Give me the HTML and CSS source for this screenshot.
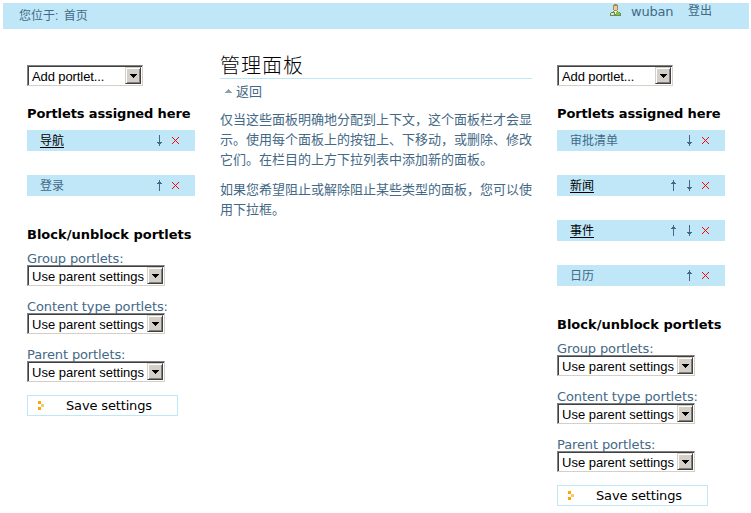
FILE: index.html
```html
<!DOCTYPE html>
<html lang="zh">
<head>
<meta charset="utf-8">
<title>管理面板</title>
<link rel="stylesheet" href="styles.css">
</head>
<body>
<svg class="defs" width="0" height="0" aria-hidden="true" shape-rendering="crispEdges">
  <symbol id="down" viewBox="0 0 7 11"><path fill="#436986" d="M3 0h1v11h-1zM1 7h5v1h-5zM2 8h3v1h-3z"/></symbol>
  <symbol id="up" viewBox="0 0 7 11"><path fill="#436986" d="M3 0h1v11h-1zM2 2h3v1h-3zM1 3h5v1h-5z"/></symbol>
  <symbol id="close" viewBox="0 0 7 7"><path fill="#f00" d="M0 0h1v1h-1zM1 1h1v1h-1zM2 2h1v1h-1zM3 3h1v1h-1zM4 2h1v1h-1zM5 1h1v1h-1zM6 0h1v1h-1zM2 4h1v1h-1zM1 5h1v1h-1zM0 6h1v1h-1zM4 4h1v1h-1zM5 5h1v1h-1zM6 6h1v1h-1z"/></symbol>
  <symbol id="caret" viewBox="0 0 7 4"><path d="M0 0h7v1h-7zM1 1h5v1h-5zM2 2h3v1h-3zM3 3h1v1h-1z"/></symbol>
  <symbol id="save" viewBox="0 0 6 9"><path fill="#ffa500" d="M0 0h3v3h-3zM0 6h3v3h-3z"/><path fill="#f8c878" d="M3 3h3v3h-3z"/></symbol>
</svg>
<header class="bar">
  <div class="crumbs">您位于: <a>首页</a></div>
  <div class="user">
    <svg class="avatar" width="11" height="12" viewBox="0 0 11 12" shape-rendering="crispEdges"><path fill="#a08a5c" d="M4 0h3v1h1v5h-1v1h-3v-1h-1v-5h1z"/><path fill="#f3c795" d="M4 2h3v4h-3z"/><path fill="#6d8a5c" d="M1 8h2v-1h5v1h2v1h1v3h-11v-3h1z"/><path fill="#d5e8b0" d="M1 9h3v2h-3z"/><path fill="#7fc440" d="M6 8h3v1h1v2h-4z"/><path fill="#f6eddc" d="M4 7h3v1h-1v2h-1v-2h-1z"/></svg>
    <span class="name">wuban</span><span class="logout">登出</span>
  </div>
</header>
<div class="columns">
  <aside class="side">
    <div class="select add"><span>Add portlet...</span><i><svg width="7" height="4"><use href="#caret"/></svg></i></div>
    <h2 class="assigned">Portlets assigned here</h2>
    <div class="portlet"><a class="link">导航</a><svg width="7" height="11"><use href="#down"/></svg><svg width="7" height="7"><use href="#close"/></svg></div>
    <div class="portlet"><span>登录</span><svg width="7" height="11"><use href="#up"/></svg><svg width="7" height="7"><use href="#close"/></svg></div>
    <h2 class="block">Block/unblock portlets</h2>
    <div class="field"><label>Group portlets:</label><div class="select"><span>Use parent settings</span><i><svg width="7" height="4"><use href="#caret"/></svg></i></div></div>
    <div class="field"><label>Content type portlets:</label><div class="select"><span>Use parent settings</span><i><svg width="7" height="4"><use href="#caret"/></svg></i></div></div>
    <div class="field"><label>Parent portlets:</label><div class="select"><span>Use parent settings</span><i><svg width="7" height="4"><use href="#caret"/></svg></i></div></div>
    <div class="save"><svg width="6" height="9"><use href="#save"/></svg><span>Save settings</span></div>
  </aside>
  <main>
    <h1>管理面板</h1>
    <div class="back"><svg width="7" height="4" viewBox="0 0 7 4" shape-rendering="crispEdges"><path fill="#8fa5ae" d="M3 0h1v1h-1zM2 1h3v1h-3zM1 2h5v1h-5zM0 3h7v1h-7z"/></svg><a>返回</a></div>
    <p>仅当这些面板明确地分配到上下文，这个面板栏才会显<br>示。使用每个面板上的按钮上、下移动，或删除、修改<br>它们。在栏目的上方下拉列表中添加新的面板。</p>
    <p>如果您希望阻止或解除阻止某些类型的面板，您可以使<br>用下拉框。</p>
  </main>
  <aside class="side">
    <div class="select add"><span>Add portlet...</span><i><svg width="7" height="4"><use href="#caret"/></svg></i></div>
    <h2 class="assigned">Portlets assigned here</h2>
    <div class="portlet"><span>审批清单</span><svg width="7" height="11"><use href="#down"/></svg><svg width="7" height="7"><use href="#close"/></svg></div>
    <div class="portlet"><a class="link">新闻</a><svg width="7" height="11"><use href="#up"/></svg><svg width="7" height="11"><use href="#down"/></svg><svg width="7" height="7"><use href="#close"/></svg></div>
    <div class="portlet"><a class="link">事件</a><svg width="7" height="11"><use href="#up"/></svg><svg width="7" height="11"><use href="#down"/></svg><svg width="7" height="7"><use href="#close"/></svg></div>
    <div class="portlet"><span>日历</span><svg width="7" height="11"><use href="#up"/></svg><svg width="7" height="7"><use href="#close"/></svg></div>
    <h2 class="block">Block/unblock portlets</h2>
    <div class="field"><label>Group portlets:</label><div class="select"><span>Use parent settings</span><i><svg width="7" height="4"><use href="#caret"/></svg></i></div></div>
    <div class="field"><label>Content type portlets:</label><div class="select"><span>Use parent settings</span><i><svg width="7" height="4"><use href="#caret"/></svg></i></div></div>
    <div class="field"><label>Parent portlets:</label><div class="select"><span>Use parent settings</span><i><svg width="7" height="4"><use href="#caret"/></svg></i></div></div>
    <div class="save"><svg width="6" height="9"><use href="#save"/></svg><span>Save settings</span></div>
  </aside>
</div>
</body>
</html>
```
FILE: styles.css
```css
* { box-sizing: border-box; }
html { overflow: hidden; }
body { margin: 0; padding: 3px 2px 0 3px; background: #fff; color: #436986; font: 13px/16px "DejaVu Sans", "Noto Sans CJK SC", sans-serif; white-space: nowrap; }
svg { display: block; flex: none; }
.defs { position: absolute; }
.bar { height: 26px; background: #bfe7f8; display: flex; justify-content: space-between; padding: 0 37px 0 16px; font-size: 12px; }
.crumbs { padding-top: 5px; font-family: "Liberation Sans", "Noto Sans CJK SC", sans-serif; }
.crumbs a { margin-left: 2px; }
.user { display: flex; }
.avatar { margin: 1px 10px 0 0; }
.name { font-size: 13px; width: 43px; padding-top: 1px; letter-spacing: -.2px; margin-right: 14px; }
.logout { width: 24px; line-height: 14px; font-family: "Noto Sans CJK SC", sans-serif; }
.columns { display: grid; grid-template-columns: 168px 312px 168px; column-gap: 25px; padding-left: 24px; }
.side { padding-top: 36px; }
.select { display: flex; width: 138px; height: 21px; border: 1px solid; border-color: #808080 #d4d0c8 #d4d0c8 #808080; box-shadow: inset 1px 1px #404040; background: #fff; color: #000; font: 13px/20px "Liberation Sans", sans-serif; padding: 1px 1px 1px 4px; justify-content: space-between; }
.select i { width: 16px; height: 17px; background: #d4d0c8; border: 1px solid; border-color: #d4d0c8 #404040 #404040 #d4d0c8; box-shadow: inset 1px 1px #fff, inset -1px -1px #808080; display: flex; align-items: center; justify-content: center; flex: none; }
.add { width: 116px; letter-spacing: -.1px; }
h2 { margin: 0; color: #000; font-size: 13px; line-height: 16px; }
.assigned { margin: 20px 0 8px; letter-spacing: -.12px; }
.portlet { height: 21px; margin-bottom: 24px; padding: 0 16px 0 13px; background: #bfe7f8; display: flex; align-items: center; font: 12px/20px "Noto Sans CJK SC", sans-serif; }
.portlet > :first-child { margin-right: auto; padding-bottom: 2px; }
.portlet svg + svg { margin-left: 9px; }
.link { color: #000; text-decoration: underline; text-underline-offset: 2px; }
.block { margin: 31px 0 8px; }
.field { height: 48px; }
.field label { display: block; height: 14px; letter-spacing: -.12px; }
.save { width: 151px; height: 21px; margin-top: 0; border: 1px solid #bfe7f8; display: flex; align-items: center; padding-left: 10px; color: #000; letter-spacing: -.15px; }
.save span { margin-left: 22px; }
main { padding-top: 23px; font-family: "Noto Sans CJK SC", sans-serif; }
h1 { margin: 0; height: 27px; border-bottom: 1px solid #bfe7f8; color: #000; font-size: 20px; line-height: 25px; font-weight: 300; letter-spacing: 1px; }
.back { display: flex; align-items: center; height: 24px; padding-left: 5px; }
.back a { margin-left: 4px; padding-bottom: 1px; }
p { margin: 0 0 10px; line-height: 20px; }
.back + p { margin-top: 6px; }
```
